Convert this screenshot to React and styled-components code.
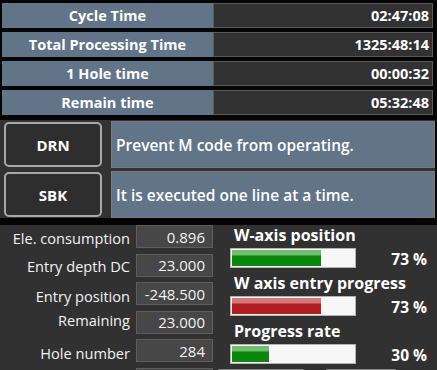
import React from "react";
import styled, { createGlobalStyle } from "styled-components";

const Global = createGlobalStyle`
  html, body { margin: 0; padding: 0; background: #050505; }
  body { width: 437px; height: 370px; overflow: hidden; font-family: "Open Sans", "Noto Sans", sans-serif; color: #fff; }
`;

const Page = styled.div`
  width: 437px;
  height: 370px;
  overflow: hidden;
  display: flex;
  flex-direction: column;
`;

const TimeTable = styled.div`
  display: grid;
  grid-template-rows: repeat(4, 25px);
  row-gap: 4px;
  padding: 3px 4px 0 2px;
`;

const TimeRow = styled.div`
  display: grid;
  grid-template-columns: 211px 1fr;
`;

const TimeLabel = styled.div`
  background: #627588;
  display: flex;
  align-items: center;
  justify-content: center;
  font-weight: 700;
  font-size: 14.5px;
`;

const TimeValue = styled.div`
  background: #323232;
  border: 1px solid #5a5a5a;
  display: flex;
  align-items: center;
  justify-content: flex-end;
  padding-right: 3px;
  font-weight: 700;
  font-size: 14.5px;
`;

const ModeSection = styled.div`
  margin-top: 5px;
  width: 435px;
  background: #323232;
  display: grid;
  grid-template-rows: 47px 47px;
  row-gap: 3px;
  padding-top: 1px;
`;

const ModeRow = styled.div`
  display: grid;
  grid-template-columns: 98px 1fr;
  column-gap: 9px;
  padding-left: 4px;
  align-items: center;
`;

const ModeButton = styled.div`
  height: 45px;
  box-sizing: border-box;
  border: 2px solid #a8a8a8;
  border-radius: 5px;
  background: #2e2e2e;
  display: flex;
  align-items: center;
  justify-content: center;
  font-weight: 700;
  font-size: 15px;
`;

const ModeText = styled.div`
  height: 47px;
  box-sizing: border-box;
  background: #627588;
  border: 1px solid #7a7a7a;
  display: flex;
  align-items: center;
  padding-left: 4px;
  font-weight: 600;
  font-size: 15.5px;
`;

const InfoSection = styled.div`
  margin-top: 7px;
  flex: 1;
  background: #313131;
  display: grid;
  grid-template-columns: 213px 1fr;
`;

const ParamList = styled.div`
  display: grid;
  grid-template-rows: repeat(6, 23px);
  row-gap: 5.6px;
`;

const ParamRow = styled.div`
  display: grid;
  grid-template-columns: 130px 77px;
  column-gap: 6px;
  align-items: center;
`;

const ParamLabel = styled.div`
  text-align: right;
  font-size: 14.6px;
  color: #f2f2f2;
  white-space: nowrap;
  position: relative;
  top: ${(p) => p.$shift || 0}px;
`;

const ParamBox = styled.div`
  height: 23px;
  box-sizing: border-box;
  background: #474747;
  border: 1px solid #5e5e5e;
  display: flex;
  align-items: center;
  justify-content: flex-end;
  padding-right: 7px;
  font-size: 15px;
  color: #f2f2f2;
`;

const ProgressList = styled.div`
  display: flex;
  flex-direction: column;
  gap: 5px;
  padding-left: 4px;
`;

const ProgressGroup = styled.div`
  display: grid;
  grid-template-columns: 126px 1fr;
  grid-template-rows: 20px 20px;
  row-gap: 3px;
  padding-left: 13px;
`;

const ProgressTitle = styled.div`
  grid-column: 1 / span 2;
  padding-left: 4px;
  font-weight: 700;
  font-size: 16px;
  line-height: 20px;
  white-space: nowrap;
`;

const Bar = styled.div`
  box-sizing: border-box;
  border: 1px solid #b4b4b4;
  background: #f7f7f7;
  padding: 1px;
  display: flex;
`;

const Fill = styled.div`
  height: 100%;
  background: ${(p) =>
    p.$tone === "red"
      ? "linear-gradient(to bottom, #d7787b 0%, #d7787b 30%, #b21f22 38%, #b21f22 100%)"
      : "linear-gradient(to bottom, #6fbf6f 0%, #6fbf6f 30%, #0a860a 38%, #0a860a 100%)"};
`;

const Percent = styled.div`
  text-align: right;
  padding-right: 10px;
  font-weight: 700;
  font-size: 15.5px;
  line-height: 20px;
  position: relative;
  top: 1px;
`;

const FooterButtons = styled.div`
  display: grid;
  grid-template-columns: 88px 72px;
  column-gap: 20px;
  height: 20px;
`;

const FooterButton = styled.div`
  border-top: 1px solid #8a8a8a;
  border-radius: 3px 3px 0 0;
  background: #3a3a3a;
`;

const times = [
  ["Cycle Time", "02:47:08"],
  ["Total Processing Time", "1325:48:14"],
  ["1 Hole time", "00:00:32"],
  ["Remain time", "05:32:48"],
];

const modes = [
  ["DRN", "Prevent M code from operating."],
  ["SBK", "It is executed one line at a time."],
];

const params = [
  ["Ele. consumption", "0.896", 1],
  ["Entry depth DC", "23.000", 1],
  ["Entry position", "-248.500", 2],
  ["Remaining", "23.000", -2],
  ["Hole number", "284", 2],
];

const progress = [
  ["W-axis position", 73, "green"],
  ["W axis entry progress", 73, "red"],
  ["Progress rate", 30, "green"],
];

export default function App() {
  return (
    <>
      <Global />
      <Page>
        <TimeTable>
          {times.map(([l, v]) => (
            <TimeRow key={l}>
              <TimeLabel>{l}</TimeLabel>
              <TimeValue>{v}</TimeValue>
            </TimeRow>
          ))}
        </TimeTable>
        <ModeSection>
          {modes.map(([b, t]) => (
            <ModeRow key={b}>
              <ModeButton>{b}</ModeButton>
              <ModeText>{t}</ModeText>
            </ModeRow>
          ))}
        </ModeSection>
        <InfoSection>
          <ParamList>
            {params.map(([l, v, s]) => (
              <ParamRow key={l}>
                <ParamLabel $shift={s}>{l}</ParamLabel>
                <ParamBox>{v}</ParamBox>
              </ParamRow>
            ))}
            <ParamRow>
              <span />
              <ParamBox />
            </ParamRow>
          </ParamList>
          <ProgressList>
            {progress.map(([t, pct, tone]) => (
              <ProgressGroup key={t}>
                <ProgressTitle>{t}</ProgressTitle>
                <Bar>
                  <Fill $tone={tone} style={{ width: `${pct}%` }} />
                </Bar>
                <Percent>{pct} %</Percent>
              </ProgressGroup>
            ))}
            <FooterButtons>
              <FooterButton />
              <FooterButton />
            </FooterButtons>
          </ProgressList>
        </InfoSection>
      </Page>
    </>
  );
}
